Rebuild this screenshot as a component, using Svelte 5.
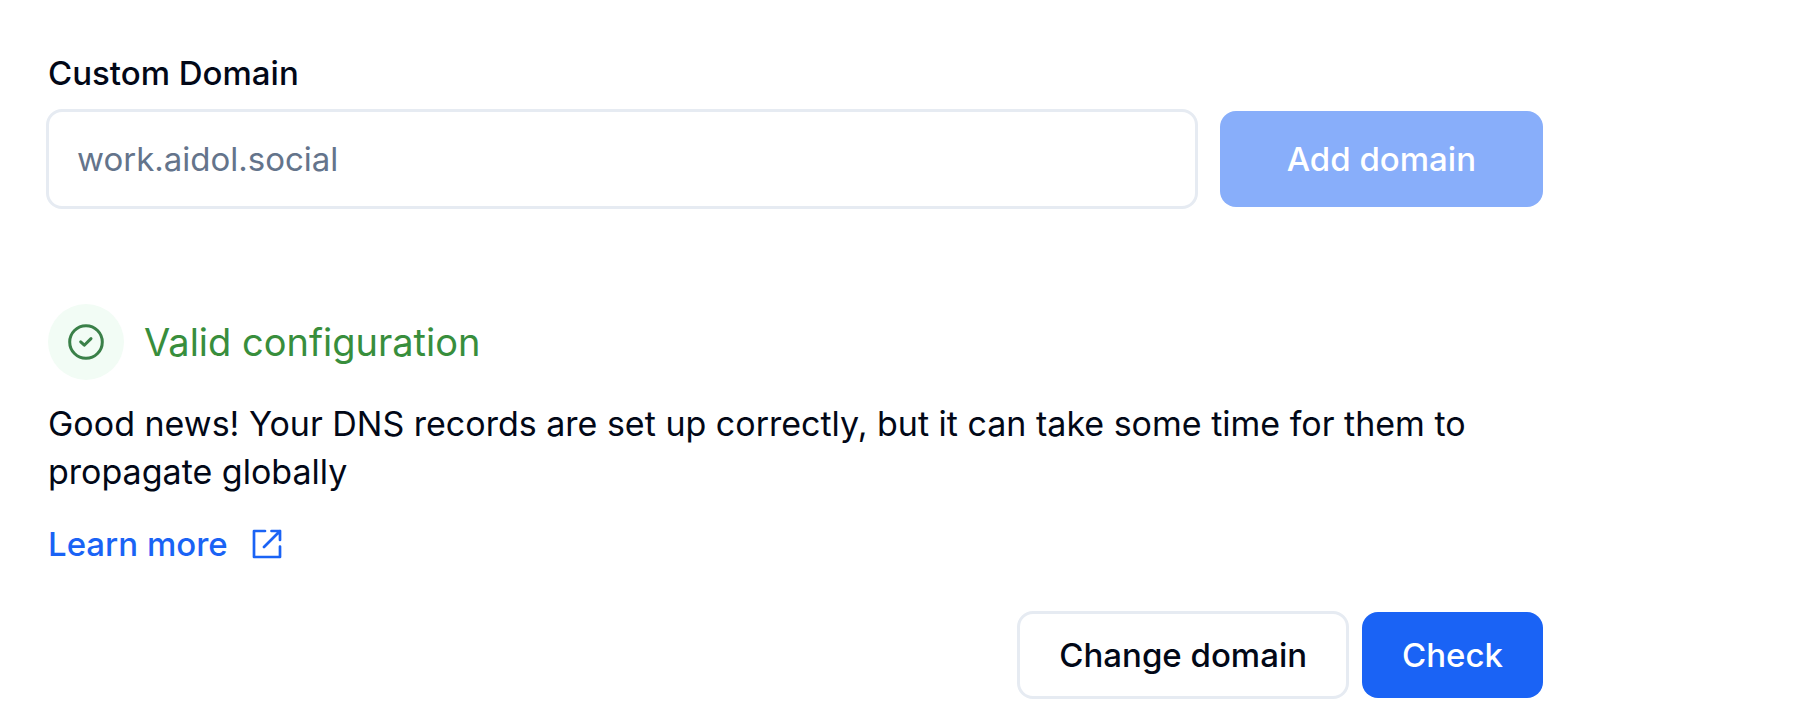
<script>
  let domain = $state('');
</script>

<main>
  <form onsubmit={(e) => e.preventDefault()}>
    <label for="domain">Custom Domain</label>
    <div class="entry">
      <input id="domain" type="text" placeholder="work.aidol.social" bind:value={domain} />
      <button class="add" type="submit">Add domain</button>
    </div>
  </form>

  <section>
    <h2>
      <span class="badge">
        <svg viewBox="0 0 36 36" width="36" height="36" aria-hidden="true">
          <circle cx="18" cy="18" r="16.3" />
          <path d="M12.7 17.8 L16.3 21.2 L23 14.6" />
        </svg>
      </span>
      Valid configuration
    </h2>
    <p>Good news! Your DNS records are set up correctly, but it can take some time for them to propagate globally</p>
    <a href="#learn-more">
      Learn more
      <svg class="external" viewBox="0 0 30 30" width="30" height="30" aria-hidden="true">
        <path d="M13 2 H2 V28 H28 V17.5 M19.5 2 H28 V11 M28 2 L12 18" />
      </svg>
    </a>
  </section>

  <div class="actions">
    <button class="change" type="button">Change domain</button>
    <button class="check" type="button">Check</button>
  </div>
</main>

<style>
  :global(body) { background: #fff; }
  main {
    padding: 53px 273px 28px 46px;
    color: #020817;
    font: 400 33px/48px Inter, sans-serif;
  }
  label { display: block; font-weight: 500; line-height: 40px; margin: 0 2px 16px; }
  .entry { display: flex; align-items: center; gap: 22px; }
  input, button { box-sizing: border-box; font: inherit; border-radius: 16px; }
  input {
    flex: 1;
    min-width: 0;
    height: 100px;
    padding: 0 28px;
    border: 3px solid #e6ebf2;
    background: #fff;
    color: #020817;
  }
  input::placeholder { color: #64748b; opacity: 1; }
  button { border: 0; font-weight: 500; white-space: nowrap; }
  .add { height: 96px; padding: 0 67px; background: #88aefa; color: #fff; }
  section { margin: 95px 2px 0; }
  h2 { display: flex; align-items: center; gap: 20px; margin: 0; font-size: 38px; font-weight: 400; color: #388e3c; }
  .badge { display: grid; place-items: center; width: 76px; height: 76px; border-radius: 50%; background: #f2fcf5; color: #3a8048; }
  svg { fill: none; stroke: currentColor; stroke-width: 3; stroke-linecap: round; stroke-linejoin: round; }
  .external { stroke-width: 2.7; }
  p { margin: 20px 0 24px; font-size: 34px; }
  a { display: inline-flex; align-items: center; gap: 24px; color: #1a63f5; font-weight: 500; text-decoration: none; }
  .actions { display: flex; justify-content: flex-end; align-items: center; gap: 13px; margin-top: 43px; }
  .change { height: 88px; padding: 0 39px; border: 3px solid #e6ebf2; background: #fff; color: #020817; }
  .check { height: 86px; padding: 0 40px; background: #1a63f5; color: #fff; }
</style>
